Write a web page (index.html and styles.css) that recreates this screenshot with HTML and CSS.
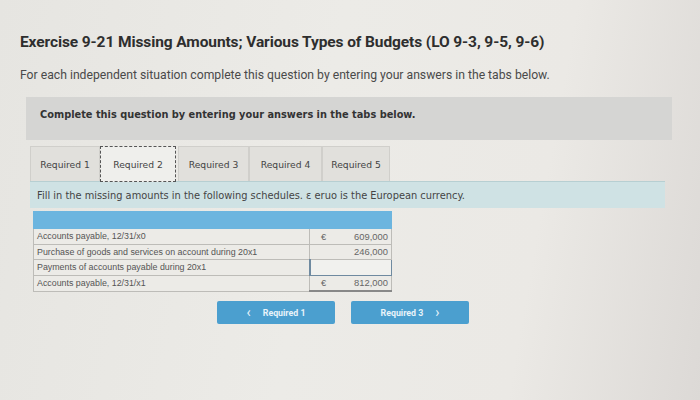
FILE: index.html
```html
<!DOCTYPE html>
<html>
<head>
<meta charset="utf-8">
<link rel="stylesheet" href="styles.css">
</head>
<body>
<div class="page">
  <h1 class="title">Exercise 9-21 Missing Amounts; Various Types of Budgets (LO 9-3, 9-5, 9-6)</h1>
  <p class="intro">For each independent situation complete this question by entering your answers in the tabs below.</p>
  <div class="notice">Complete this question by entering your answers in the tabs below.</div>
  <div class="tabs">
    <div class="tab t1">Required 1</div>
    <div class="tab t2 active">Required 2</div>
    <div class="tab t3">Required 3</div>
    <div class="tab t4">Required 4</div>
    <div class="tab t5">Required 5</div>
  </div>
  <div class="info">Fill in the missing amounts in the following schedules. ε eruo is the European currency.</div>
  <table class="sched">
    <tr class="head"><td colspan="2"></td></tr>
    <tr><td class="lbl">Accounts payable, 12/31/x0</td><td class="val"><span class="cur">€</span><span>609,000</span></td></tr>
    <tr><td class="lbl">Purchase of goods and services on account during 20x1</td><td class="val"><span class="cur"></span><span>246,000</span></td></tr>
    <tr><td class="lbl">Payments of accounts payable during 20x1</td><td class="val input"><span></span></td></tr>
    <tr><td class="lbl">Accounts payable, 12/31/x1</td><td class="val total"><span class="cur">€</span><span>812,000</span></td></tr>
  </table>
  <div class="nav">
    <div class="btn"><span class="chev">&lsaquo;</span>Required 1</div>
    <div class="btn">Required 3<span class="chev r">&rsaquo;</span></div>
  </div>
</div>
</body>
</html>
```
FILE: styles.css
```css
html, body {
  margin: 0;
  height: 100%;
}
body {
  background: linear-gradient(100deg, #e6e5e1 0%, #ecebe7 45%, #ebe9e5 75%, #dcd9d6 100%);
  font-family: Roboto, "Liberation Sans", sans-serif;
  color: #333;
  overflow: hidden;
}
.page {
  padding: 33px 0 0 20px;
  width: 670px;
}
.title {
  margin: 0;
  font-size: 15.5px;
  line-height: 18px;
  font-weight: 700;
  color: #2e2e2e;
  letter-spacing: -0.1px;
}
.intro {
  margin: 17px 0 0 0;
  font-size: 12.2px;
  line-height: 15px;
  color: #4a4a4a;
}
.notice {
  margin: 14px 0 0 6px;
  width: 646px;
  height: 43px;
  box-sizing: border-box;
  padding: 12px 0 0 14px;
  background: #d5d5d3;
  font-family: "DejaVu Sans", Verdana, sans-serif;
  font-weight: 700;
  font-size: 9.8px;
  color: #333;
}
.tabs {
  display: flex;
  margin: 6px 0 0 10px;
  height: 35px;
}
.tab {
  box-sizing: border-box;
  height: 35px;
  display: flex;
  align-items: center;
  justify-content: center;
  font-family: "DejaVu Sans", Verdana, sans-serif;
  font-size: 9.2px;
  color: #444;
  background: #e1e0dc;
  border: 1px solid #d0cfcb;
  border-bottom: none;
}
.t1 { width: 70px; }
.t2 { width: 76px; }
.t3 { width: 71px; margin-left: 2px; }
.t4 { width: 73px; }
.t5 { width: 68px; }
.tab.active {
  background: #efefec;
  border: 1px dashed #555;
  height: 36px;
}
.info {
  margin: 0 0 0 10px;
  width: 635px;
  height: 27px;
  box-sizing: border-box;
  padding: 8px 0 0 7px;
  background: #cfe2e4;
  border-top: 1px solid #b7cfd2;
  font-family: "DejaVu Sans", Verdana, sans-serif;
  font-size: 9.85px;
  color: #444;
}
.sched {
  margin: 3px 0 0 13px;
  border-collapse: collapse;
  font-family: "Liberation Sans", Arial, sans-serif;
  font-size: 8.85px;
  color: #555;
  width: 359px;
}
.sched td {
  border: 1px solid #bdbcb8;
  height: 14.5px;
  padding: 0 3px;
  background: #ecebe7;
}
.sched .head td {
  background: #6cb5df;
  height: 16px;
  border-color: #6cb5df;
}
.lbl { width: 272px; }
.val {
  width: 75px;
  color: #666;
  font-size: 9.4px;
}
.val .cur {
  float: left;
  margin-left: 8px;
}
.val span:last-child {
  float: right;
}
.val.input {
  border: 1px solid #6f8aa0;
  border-left: 2px solid #6f8aa0;
  background: #f1f1ee;
}
.val.total {
  border-bottom: 2px solid #888;
}
.nav {
  display: flex;
  gap: 16px;
  margin: 9px 0 0 197px;
}
.btn {
  width: 118px;
  height: 23px;
  background: #4b9fcf;
  border-radius: 2px;
  color: #e8f3fa;
  font-size: 8.8px;
  font-weight: 700;
  display: flex;
  align-items: center;
  justify-content: center;
}
.chev {
  font-size: 14px;
  font-weight: 400;
  margin-right: 12px;
  line-height: 1;
  margin-top: -2px;
}
.chev.r {
  margin-right: 0;
  margin-left: 12px;
}
```
